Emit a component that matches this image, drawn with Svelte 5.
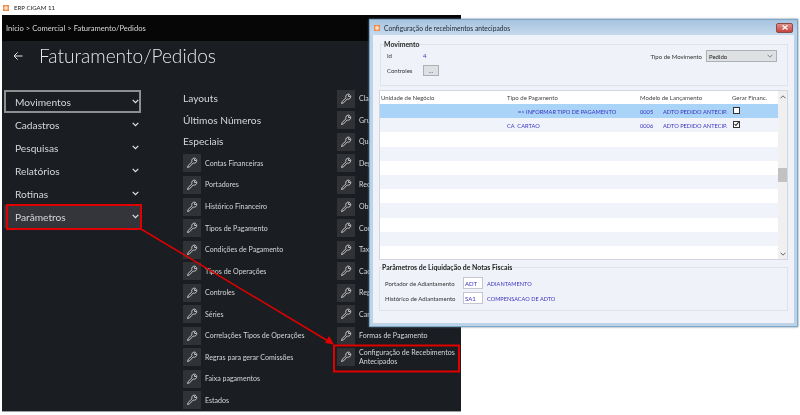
<script>
  const menu = ['Movimentos', 'Cadastros', 'Pesquisas', 'Relatórios', 'Rotinas', 'Parâmetros']
  const col1 = ['Contas Financeiras', 'Portadores', 'Histórico Financeiro', 'Tipos de Pagamento', 'Condições de Pagamento', 'Tipos de Operações', 'Controles', 'Séries', 'Correlações Tipos de Operações', 'Regras para gerar Comissões', 'Faixa pagamentos', 'Estados']
  const col2 = ['Classificação', 'Grupos', 'Quantidades', 'Departamentos', 'Recebimentos', 'Observações', 'Contas', 'Taxas', 'Cadastros', 'Regras', 'Cartões', 'Formas de Pagamento', 'Configuração de Recebimentos Antecipados']
  const rows = [
    { tipo: '=> INFORMAR TIPO DE PAGAMENTO', indent: true, cod: '0005', modelo: 'ADTO PEDIDO ANTECIP.', check: 'off', sel: true },
    { tipo: 'CA  CARTAO', cod: '0006', modelo: 'ADTO PEDIDO ANTECIP.', check: 'on' },
    {}, {}, {}, {}, {}, {}, {}, {}, {}
  ]
</script>

{#snippet tool()}
  <span class="tool">
    <svg width="12" height="12" viewBox="0 0 12 12" fill="none" stroke="#c0c3c7" stroke-width="1">
      <path d="M1.5 10.5 L2.2 8.4 L6 4.8 A2.6 2.6 0 0 1 9.6 1.4 L8.2 3 L9 3.9 L10.6 2.6 A2.6 2.6 0 0 1 7.2 6 L3.6 9.8 Z" />
    </svg>
  </span>
{/snippet}

{#snippet logo()}
  <span class="logo"></span>
{/snippet}

<div class="screen">
  <div class="winTitle">{@render logo()}ERP CIGAM 11</div>

  <div class="panel">
    <div class="crumbs">Início &gt; Comercial &gt; Faturamento/Pedidos</div>
    <div class="head">
      <svg class="back" width="10" height="10" viewBox="0 0 10 10" fill="none" stroke="#e4e6e8" stroke-width="1">
        <path d="M9.5 5 H1 M4.6 1.4 L1 5 L4.6 8.6" />
      </svg>
      <h1>Faturamento/Pedidos</h1>
    </div>

    <div class="body">
      <nav class="menu">
        {#each menu as item, i (item)}
          <div class="menuItem" class:focus={i === 0} class:active={i === 5}>
            <span>{item}</span>
            <svg width="7" height="5" viewBox="0 0 7 5" fill="none" stroke="#e4e6e8" stroke-width="1.2">
              <path d="M.7 .9 L3.5 3.7 L6.3 .9" />
            </svg>
          </div>
        {/each}
      </nav>

      <div class="col first">
        <div class="plain">Layouts</div>
        <div class="plain">Últimos Números</div>
        <div class="plain">Especiais</div>
        {#each col1 as label (label)}
          <div class="entry">{@render tool()}<span>{label}</span></div>
        {/each}
      </div>

      <div class="col second">
        {#each col2 as label, i (label)}
          <div class="entry" class:marked={i === 12}>{@render tool()}<span>{label}</span></div>
        {/each}
      </div>
    </div>
  </div>

  <section class="dialog">
    <header class="dlgTitle">
      {@render logo()}<span>Configuração de recebimentos antecipados</span>
      <button class="close" aria-label="Fechar">
        <svg width="6" height="5" viewBox="0 0 6 5" stroke="#fff" stroke-width="1.3"><path d="M.5 .5 L5.5 4.5 M5.5 .5 L.5 4.5" /></svg>
      </button>
    </header>

    <div class="dlgBody">
      <fieldset class="mov">
        <legend>Movimento</legend>
        <div class="movLeft">
          <div class="line"><span class="lbl">Id</span><span class="val">4</span></div>
          <div class="line"><span class="lbl">Controles</span><span class="dots">...</span></div>
        </div>
        <div class="movRight">
          <span>Tipo de Movimento</span>
          <div class="select">
            <span>Pedido</span>
            <svg width="6" height="4" viewBox="0 0 6 4" fill="none" stroke="#777" stroke-width=".9"><path d="M.5 .7 L3 3.2 L5.5 .7" /></svg>
          </div>
        </div>
      </fieldset>

      <div class="grid">
        <div class="table">
          <div class="tr th">
            <span>Unidade de Negócio</span><span>Tipo de Pagamento</span><span>Modelo de Lançamento</span><span>Gerar Financ.</span>
          </div>
          {#each rows as r, i (i)}
            <div class="tr" class:sel={r.sel} class:alt={i % 2 === 1}>
              <span></span>
              <span class:indent={r.indent}>{r.tipo ?? ''}</span>
              <span class="model">{#if r.cod}<b>{r.cod}</b>{r.modelo}{/if}</span>
              <span>
                {#if r.check}
                  <i class="box">
                    {#if r.check === 'on'}
                      <svg width="6" height="6" viewBox="0 0 6 6" fill="none" stroke="#222" stroke-width="1.3"><path d="M.6 3 L2.3 4.8 L5.5 .8" /></svg>
                    {/if}
                  </i>
                {/if}
              </span>
            </div>
          {/each}
        </div>
        <div class="scroll">
          <svg width="6" height="4" viewBox="0 0 6 4" fill="none" stroke="#555" stroke-width=".9"><path d="M.5 3.3 L3 .8 L5.5 3.3" /></svg>
          <div class="thumb"></div>
          <svg width="6" height="4" viewBox="0 0 6 4" fill="none" stroke="#555" stroke-width=".9"><path d="M.5 .7 L3 3.2 L5.5 .7" /></svg>
        </div>
      </div>

      <fieldset class="liq">
        <legend>Parâmetros de Liquidação de Notas Fiscais</legend>
        <div class="liqRow"><span class="lbl">Portador de Adiantamento</span><span class="code">ADT</span><span class="val">ADIANTAMENTO</span></div>
        <div class="liqRow"><span class="lbl">Histórico de Adiantamento</span><span class="code">SA1</span><span class="val">COMPENSACAO DE ADTO</span></div>
      </fieldset>
    </div>
  </section>

  <svg class="arrow" width="800" height="415" viewBox="0 0 800 415" fill="none">
    <rect x="7" y="205" width="134" height="24" stroke="#e00000" stroke-width="2" />
    <rect x="334" y="345.500" width="125" height="26" stroke="#e00000" stroke-width="2" />
    <path d="M141 229 L328 341" stroke="#e00000" stroke-width="1.500" />
    <path d="M334 344.500 L325 343 L329 336 Z" fill="#e00000" />
  </svg>
</div>

<style>
  :global(body) {
    margin: 0;
    background: #fff;
  }

  .screen {
    position: relative;
    width: 800px;
    height: 415px;
    overflow: hidden;
    background: #fff;
    font-family: Lato, "Open Sans", sans-serif;
    filter: blur(0.35px);
  }

  .winTitle {
    display: flex;
    align-items: center;
    gap: 5px;
    height: 15px;
    padding-left: 3px;
    font-size: 6.1px;
    color: #222;
  }

  .logo {
    display: inline-block;
    width: 6px;
    height: 6px;
    background: radial-gradient(circle, #fbe3cf 20%, #f0843c 70%);
    flex: none;
  }

  .panel {
    display: flex;
    flex-direction: column;
    width: 459px;
    height: 396px;
    margin-left: 2px;
    background: #1a1d21;
    border-bottom: 1px solid #9aa0a6;
  }

  .crumbs {
    flex: none;
    height: 26px;
    line-height: 26px;
    padding-left: 4px;
    background: #060606;
    color: #d6d8da;
    font-size: 7.6px;
  }

  .head {
    display: flex;
    align-items: center;
    height: 29px;
    padding-left: 11px;
    flex: none;
  }

  .back {
    margin-right: 16px;
  }

  h1 {
    margin: 0;
    font-size: 19.1px;
    font-weight: 300;
    color: #e6e8ea;
    white-space: nowrap;
  }

  .body {
    display: flex;
    padding-top: 18px;
  }

  .menu {
    width: 181px;
    flex: none;
    margin-top: 2px;
    padding-left: 2px;
    box-sizing: border-box;
  }

  .menuItem {
    display: flex;
    align-items: center;
    justify-content: space-between;
    width: 137px;
    height: 23px;
    box-sizing: border-box;
    padding: 0 2px 0 11px;
    font-size: 10.2px;
    color: #d5d7d9;
  }

  .menuItem.focus {
    border: 2px solid #8d8f91;
    padding-left: 9px;
    padding-right: 0;
  }

  .menuItem.active {
    background: #33353a;
  }

  .col {
    display: flex;
    flex-direction: column;
    flex: none;
  }

  .first {
    width: 154px;
  }

  .second {
    width: 122px;
  }

  .plain {
    height: 21.550px;
    line-height: 21.550px;
    font-size: 10.2px;
    color: #d5d7d9;
    white-space: nowrap;
  }

  .entry {
    display: flex;
    align-items: center;
    gap: 4px;
    height: 21.550px;
    font-size: 7.05px;
    color: #d5d7d9;
    white-space: nowrap;
  }

  .entry.marked {
    white-space: normal;
    line-height: 9.500px;
  }

  .entry.marked span:last-child {
    width: 100px;
  }

  .tool {
    display: flex;
    align-items: center;
    justify-content: center;
    width: 18px;
    height: 18px;
    flex: none;
    background: #303235;
  }

  .dialog {
    position: absolute;
    left: 369px;
    top: 19px;
    width: 429px;
    height: 308px;
    box-sizing: border-box;
    border: 1px solid #7fa6c6;
    background: #bcd3e8;
    display: flex;
    flex-direction: column;
    box-shadow: 0 0 2px #5a7d99;
  }

  .dlgTitle {
    display: flex;
    align-items: center;
    gap: 4px;
    height: 15px;
    padding-left: 4px;
    flex: none;
    font-size: 6.7px;
    color: #1c2530;
    background: linear-gradient(#a7c3de, #c5daee);
  }

  .close {
    margin-left: auto;
    margin-right: 4px;
    width: 17px;
    height: 10px;
    padding: 0;
    border: 1px solid #8c4a48;
    border-radius: 2px;
    background: linear-gradient(#e0908a, #c6433d);
    display: flex;
    align-items: center;
    justify-content: center;
  }

  .dlgBody {
    flex: 1;
    margin: 0 3px 3px;
    padding: 5px 6px 0;
    background: #f0f2f9;
    display: flex;
    flex-direction: column;
    font-size: 6px;
    color: #333;
  }

  fieldset {
    margin: 0;
    border: 1px solid #dfe2ea;
    box-sizing: border-box;
    min-width: 0;
  }

  legend {
    padding: 0;
    font-size: 6.9px;
    font-weight: 700;
    color: #222;
    margin-left: -3px;
  }

  .mov {
    display: flex;
    justify-content: space-between;
    height: 46px;
    margin-left: 1px;
    padding: 0 10px 0 6px;
    flex: none;
  }

  .movLeft {
    display: flex;
    flex-direction: column;
    gap: 4px;
    padding-top: 2px;
  }

  .line {
    display: flex;
    align-items: center;
    height: 11px;
  }

  .lbl {
    flex: none;
    white-space: nowrap;
  }

  .line .lbl {
    width: 36px;
  }

  .val {
    color: #3b35c0;
  }

  .dots {
    width: 16px;
    height: 11px;
    line-height: 10px;
    text-align: center;
    box-sizing: border-box;
    border: 1px solid #adb0b6;
    background: #dfe0e3;
    color: #444;
  }

  .movRight {
    display: flex;
    align-items: center;
    gap: 4px;
    height: 12px;
    margin-top: 2px;
  }

  .select {
    display: flex;
    align-items: center;
    justify-content: space-between;
    width: 71px;
    height: 12px;
    box-sizing: border-box;
    padding: 0 3px 0 2px;
    border: 1px solid #adb0b6;
    background: #dfe0e3;
    color: #222;
  }

  .grid {
    display: flex;
    height: 170px;
    margin-top: 4px;
    background: #fff;
    border: 1px solid #d3d6dc;
    box-sizing: border-box;
    flex: none;
  }

  .table {
    flex: 1;
    min-width: 0;
  }

  .tr {
    display: grid;
    grid-template-columns: 126px 133px 92px 1fr;
    height: 14.200px;
    align-items: center;
    color: #3b35c0;
    white-space: pre;
    padding-left: 1px;
    font-size: 5.7px;
  }

  .tr.th {
    height: 13px;
    color: #444;
    font-size: 6px;
  }

  .tr.alt {
    background: #f1f3fa;
  }

  .tr.sel {
    background: #a9d3f7;
  }

  .indent {
    padding-left: 11px;
  }

  .model b {
    font-weight: 400;
    display: inline-block;
    width: 23px;
  }

  .box {
    display: flex;
    align-items: center;
    justify-content: center;
    width: 7px;
    height: 7px;
    margin-left: 1px;
    margin-top: -2px;
    box-sizing: border-box;
    border: 1px solid #333;
    background: #fff;
  }

  .scroll {
    position: relative;
    display: flex;
    flex-direction: column;
    align-items: center;
    justify-content: space-between;
    width: 9px;
    flex: none;
    background: #f0f0f0;
    padding: 4px 0 3px;
    box-sizing: border-box;
  }

  .thumb {
    position: absolute;
    top: 77px;
    left: 0;
    width: 9px;
    height: 14px;
    background: #c2c2c2;
  }

  .liq {
    height: 48px;
    margin-top: 3px;
    padding: 6px 0 0 5px;
    flex: none;
  }

  .liqRow {
    display: flex;
    align-items: center;
    height: 12px;
    margin-bottom: 3px;
  }

  .liqRow .lbl {
    width: 78px;
  }

  .liqRow .val {
    font-size: 5.6px;
  }

  .code {
    width: 20px;
    height: 12px;
    line-height: 11px;
    box-sizing: border-box;
    border: 1px solid #c4c7cf;
    background: #fff;
    padding-left: 1px;
    color: #3b35c0;
    margin-right: 4px;
  }

  .arrow {
    position: absolute;
    left: 0;
    top: 0;
    pointer-events: none;
  }
</style>
